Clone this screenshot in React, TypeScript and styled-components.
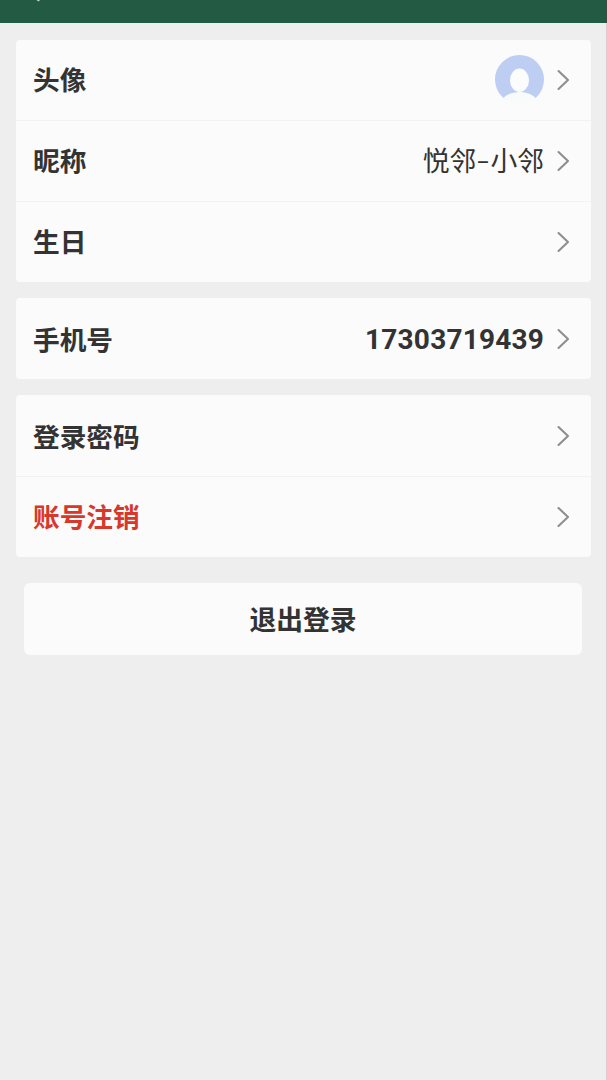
import React from "react";
import styled, { createGlobalStyle } from "styled-components";

const GlobalStyle = createGlobalStyle`
  * { box-sizing: border-box; }
  body {
    margin: 0;
    background: #eeeeee;
    color: #333333;
    font-family: "Noto Sans CJK SC", sans-serif;
  }
`;

const Page = styled.div`
  display: flex;
  flex-direction: column;
  min-height: 1080px;
  background: #eeeeee;
`;

const Header = styled.header`
  height: 23px;
  padding-left: 36px;
  background: #235a43;
`;

const BackTip = styled.svg`
  display: block;
`;

const Content = styled.main`
  display: flex;
  flex: 1;
  flex-direction: column;
  gap: 16px;
  padding: 17px 15px 0 16px;
  border-right: 1px solid #cfcfcf;
`;

const Card = styled.section`
  border-radius: 4px;
  background: #fbfbfb;
`;

const Row = styled.div<{ $compact?: boolean }>`
  display: flex;
  align-items: center;
  height: ${(p) => (p.$compact ? 80 : 81)}px;
  padding: ${(p) => (p.$compact ? "0 21px 1px 17px" : "1px 21px 0 17px")};

  & + & {
    padding: 0 21px 1px 17px;
    border-top: 1px solid #f2f2f2;
  }
`;

const Label = styled.span<{ $danger?: boolean }>`
  flex: 1;
  padding-bottom: 1px;
  font-size: 26.7px;
  font-weight: 700;
  line-height: 40px;
  color: ${(p) => (p.$danger ? "#d8382c" : "#333333")};
`;

const Nickname = styled.span`
  padding-bottom: 1px;
  font-size: 26.8px;
  line-height: 40px;
`;

const Hyphen = styled.span`
  display: inline-block;
  width: 14px;
  text-align: center;
  transform: translateY(-1px) scaleX(1.45);
`;

const Phone = styled.span`
  padding-top: 1px;
  font-family: Roboto, sans-serif;
  font-size: 28px;
  font-weight: 700;
  letter-spacing: 0.2px;
  line-height: 40px;
`;

const Arrow = styled.svg`
  flex: none;
  margin-left: 12px;
`;

const LogoutButton = styled.button`
  height: 72px;
  margin: 10px 9px 0 8px;
  padding: 0 0 1px;
  border: 0;
  border-radius: 6px;
  background: #fbfbfb;
  color: #333333;
  font: 700 26.8px/40px "Noto Sans CJK SC", sans-serif;
`;

const Chevron = () => (
  <Arrow width="14" height="22" viewBox="0 0 14 22" fill="none">
    <path d="M2.5 2 L12 11 L2.5 20" stroke="#8e8e8e" strokeWidth="2.1" strokeLinecap="round" strokeLinejoin="round" />
  </Arrow>
);

const Avatar = () => (
  <svg width="49" height="49" viewBox="0 0 49 49">
    <defs>
      <clipPath id="avatar-disc">
        <circle cx="24.5" cy="24.5" r="24.5" />
      </clipPath>
    </defs>
    <g clipPath="url(#avatar-disc)">
      <path d="M0 0 H49 V44 H0 Z" fill="#becdf2" />
      <path d="M7 44 C16 34.5 33 34.5 42 44 V49 H7 Z" fill="#f9fbfb" />
      <ellipse cx="24.5" cy="25.3" rx="9.5" ry="11.7" fill="#fbfcfc" />
    </g>
  </svg>
);

type ItemProps = {
  label: string;
  danger?: boolean;
  compact?: boolean;
  children?: React.ReactNode;
};

const Item = ({ label, danger, compact, children }: ItemProps) => (
  <Row $compact={compact}>
    <Label $danger={danger}>{label}</Label>
    {children}
    <Chevron />
  </Row>
);

export default function App() {
  return (
    <Page>
      <GlobalStyle />
      <Header>
        <BackTip width="5" height="2" viewBox="0 0 5 2">
          <path d="M0.5 0 H4 L2.5 1.5 Z" fill="#c5d5cd" />
        </BackTip>
      </Header>
      <Content>
        <Card>
          <Item label="头像" compact>
            <Avatar />
          </Item>
          <Item label="昵称">
            <Nickname>
              悦邻<Hyphen>-</Hyphen>小邻
            </Nickname>
          </Item>
          <Item label="生日" />
        </Card>
        <Card>
          <Item label="手机号">
            <Phone>17303719439</Phone>
          </Item>
        </Card>
        <Card>
          <Item label="登录密码" />
          <Item label="账号注销" danger />
        </Card>
        <LogoutButton>退出登录</LogoutButton>
      </Content>
    </Page>
  );
}
